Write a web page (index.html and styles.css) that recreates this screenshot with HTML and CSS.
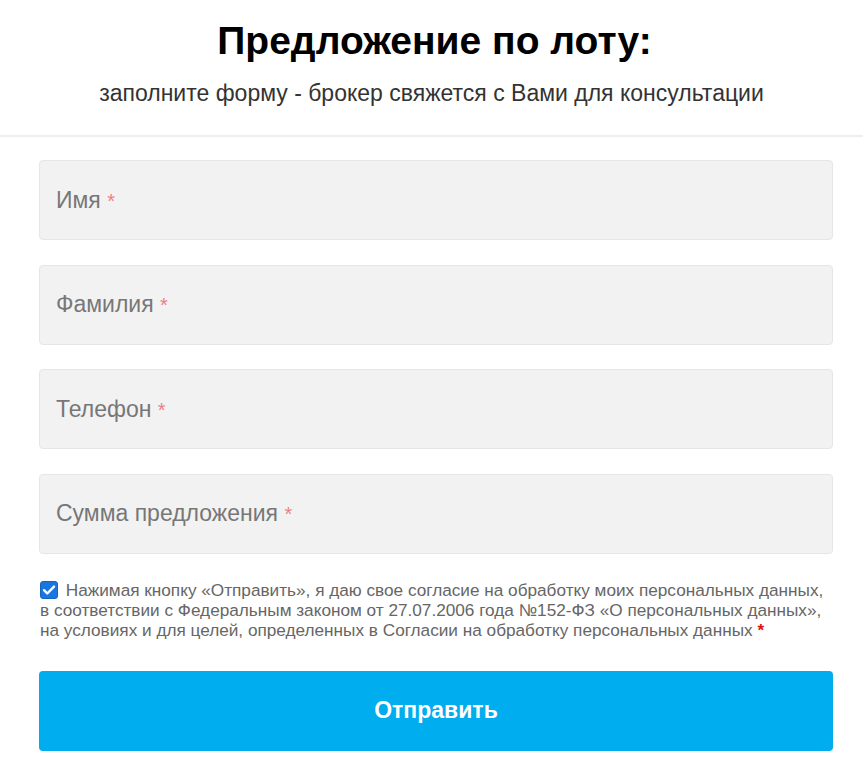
FILE: index.html
```html
<!DOCTYPE html>
<html lang="ru">
<head>
<meta charset="utf-8">
<link rel="stylesheet" href="styles.css">
</head>
<body>
<div class="page">
  <header class="head">
    <h1 class="title">Предложение по лоту:</h1>
    <p class="subtitle">заполните форму - брокер свяжется с Вами для консультации</p>
  </header>
  <form class="form">
    <div class="field"><span class="label">Имя <span class="req">*</span></span></div>
    <div class="field"><span class="label">Фамилия <span class="req">*</span></span></div>
    <div class="field"><span class="label">Телефон <span class="req">*</span></span></div>
    <div class="field"><span class="label">Сумма предложения <span class="req">*</span></span></div>
    <div class="consent">
      <span class="check"><svg width="18" height="18" viewBox="0 0 18 18"><rect x="0.5" y="0.5" width="17" height="17" rx="2.5" fill="#1976e0" stroke="#1565c0"/><path d="M4 9.2l3.3 3.3L14 5.6" fill="none" stroke="#fff" stroke-width="2.4" stroke-linecap="round" stroke-linejoin="round"/></svg></span>
      Нажимая кнопку «Отправить», я даю свое согласие на обработку моих персональных данных,<br>в соответствии с Федеральным законом от 27.07.2006 года №152-ФЗ «О персональных данных»,<br>на условиях и для целей, определенных в Согласии на обработку персональных данных <span class="req2">*</span>
    </div>
    <div class="button">Отправить</div>
  </form>
</div>
</body>
</html>
```

FILE: styles.css
```css
html, body {
  margin: 0;
  padding: 0;
  background: #fff;
}
body {
  font-family: "Liberation Sans", Arial, sans-serif;
}
.page {
  width: 863px;
}
.head {
  box-sizing: border-box;
  height: 137px;
  border-bottom: 2px solid #eeeeee;
  padding-top: 19px;
  text-align: center;
}
.title {
  margin: 0;
  padding-left: 6px;
  font-size: 39px;
  line-height: 44px;
  font-weight: bold;
  color: #000;
}
.subtitle {
  margin: 16px 0 0;
  font-size: 23px;
  line-height: 28px;
  color: #333;
}
.form {
  padding: 23px 30px 0 39px;
  display: flex;
  flex-direction: column;
}
.field {
  box-sizing: border-box;
  height: 80px;
  background: #f2f2f2;
  border: 1px solid #e6e6e6;
  border-radius: 4px;
  margin-bottom: 24.67px;
  display: flex;
  align-items: center;
  padding-left: 16px;
}
.label {
  font-size: 23px;
  color: #777;
}
.req {
  color: #ee7f83;
  font-size: 20px;
}
.consent {
  margin-top: 1.33px;
  font-size: 17.2px;
  line-height: 20px;
  color: #666;
  white-space: nowrap;
  padding-left: 1px;
}
.check {
  display: inline-block;
  vertical-align: -3px;
  margin-right: 3px;
  line-height: 0;
}
.req2 {
  color: #e01010;
  font-weight: bold;
}
.button {
  margin-top: 31px;
  height: 80px;
  background: #00adef;
  border-radius: 4px;
  color: #fff;
  font-weight: bold;
  font-size: 23px;
  display: flex;
  align-items: center;
  justify-content: center;
}
```
